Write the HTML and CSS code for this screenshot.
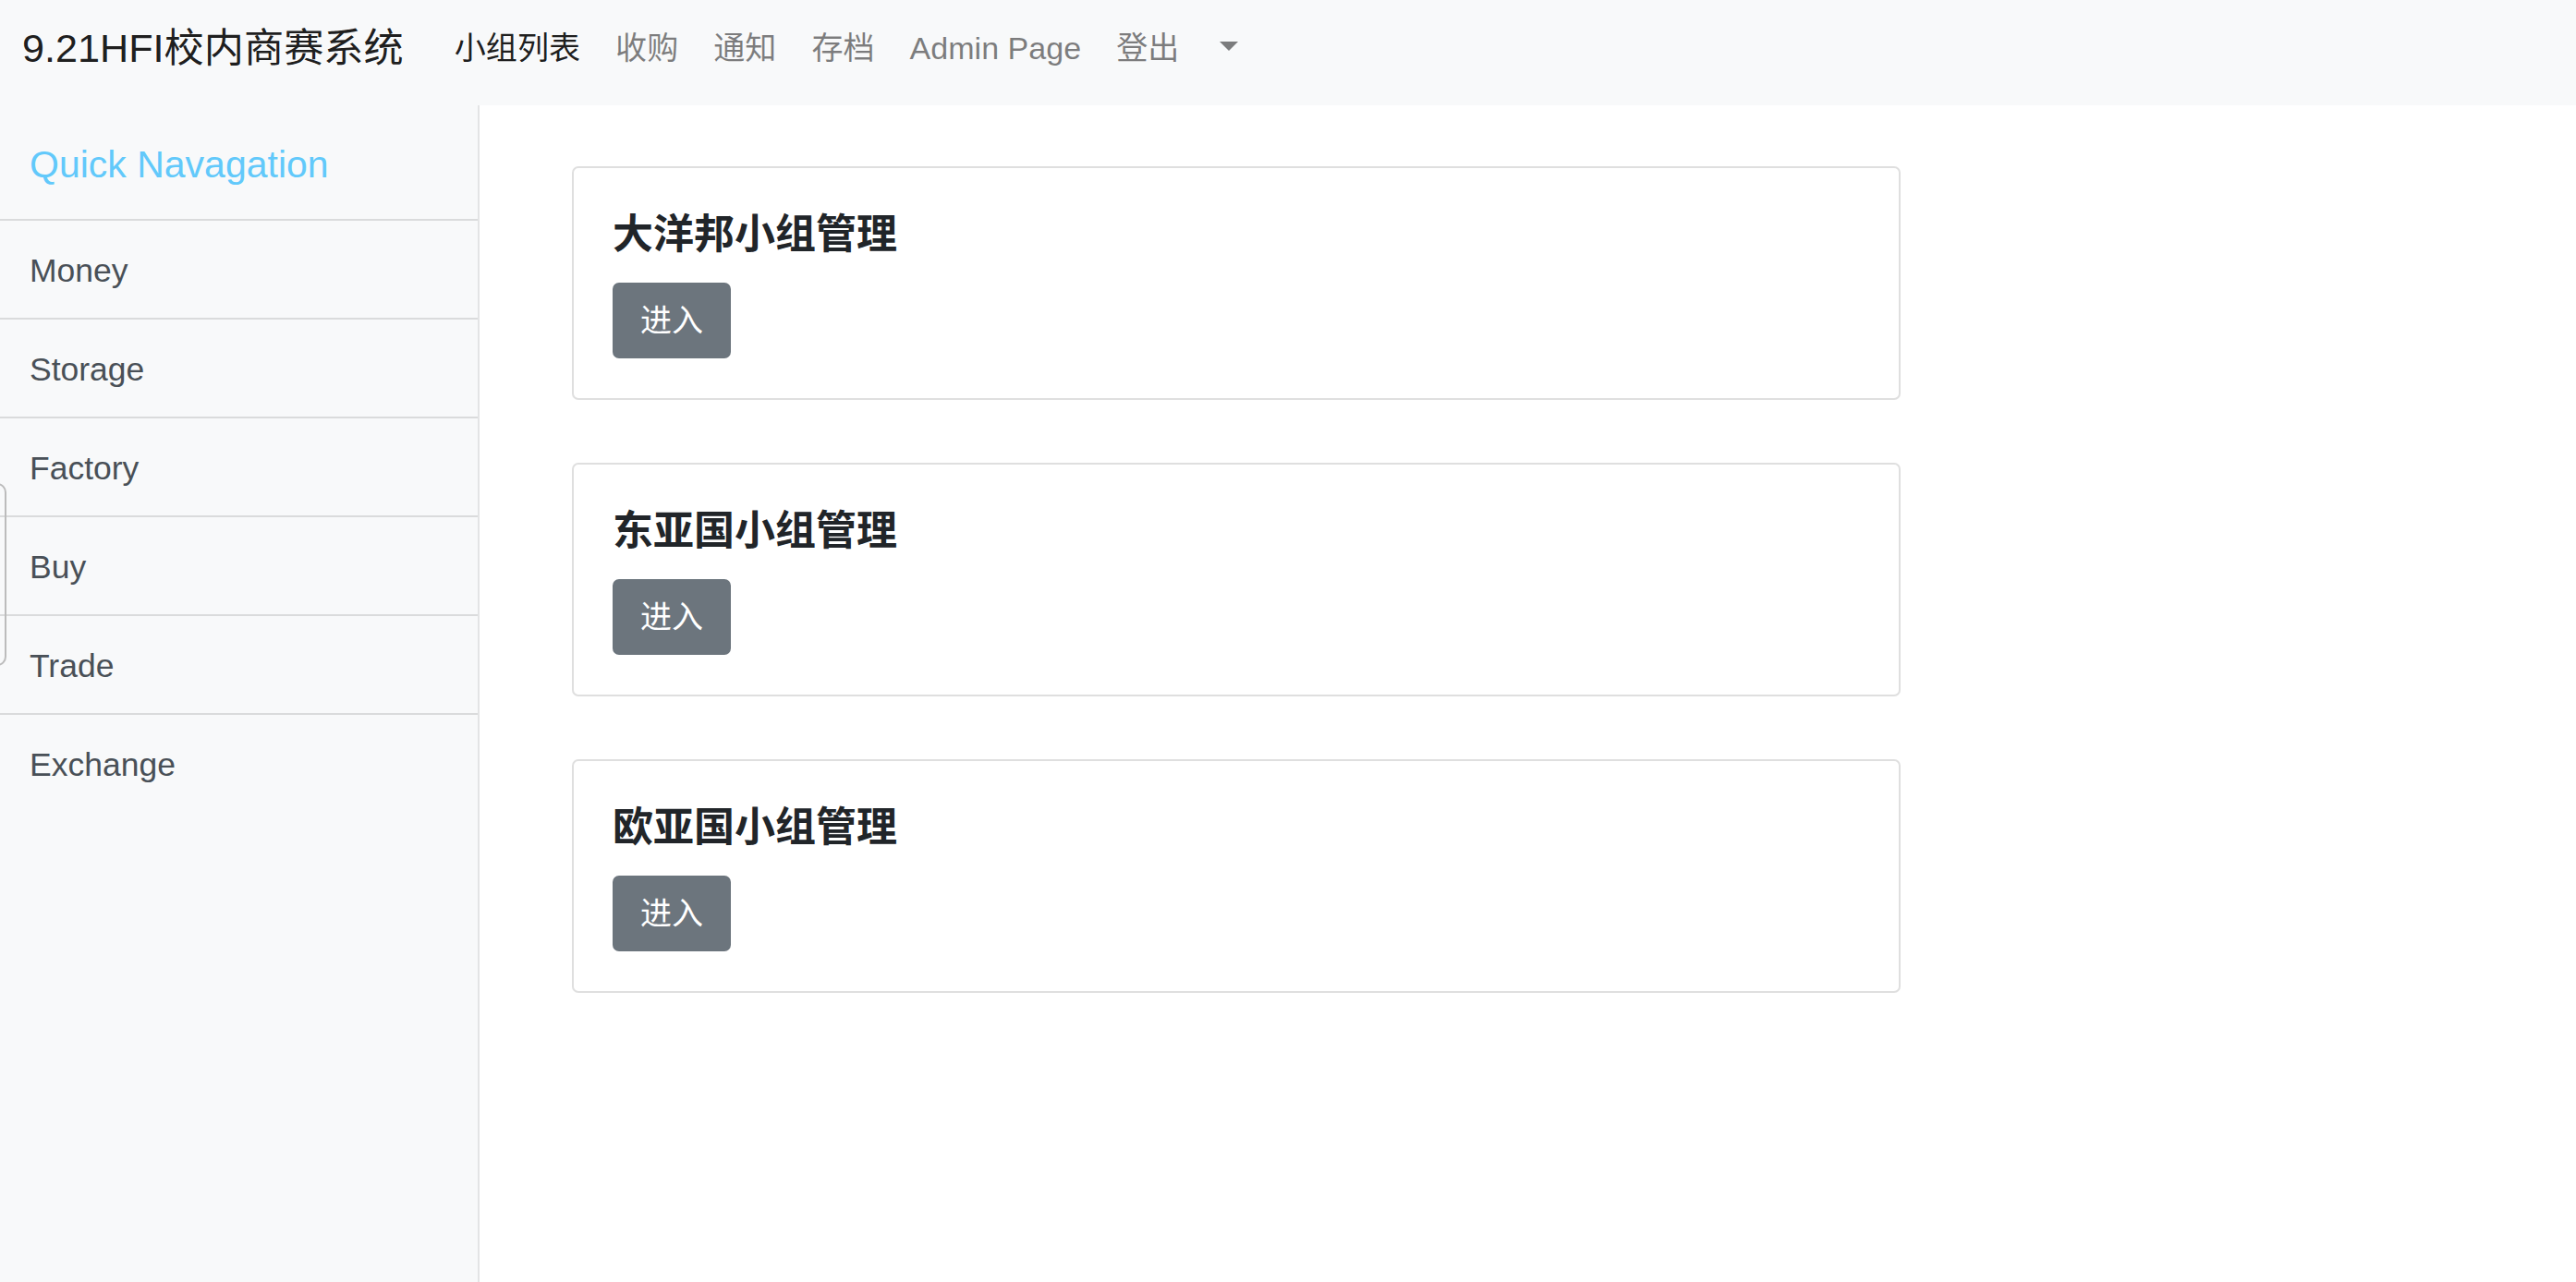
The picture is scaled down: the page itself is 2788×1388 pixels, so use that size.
FILE: index.html
```html
<!DOCTYPE html>
<html lang="zh-CN">
<head>
    <meta charset="UTF-8">
    <meta name="viewport" content="width=device-width, initial-scale=1.0">
    <title>9.21HFI校内商赛系统</title>
    <link rel="stylesheet" href="styles.css">
</head>
<body>
    <nav class="navbar">
        <a class="brand" href="#">9.21HFI校内商赛系统</a>
        <ul class="nav">
            <li><a class="nav-link active" href="#">小组列表</a></li>
            <li><a class="nav-link" href="#">收购</a></li>
            <li><a class="nav-link" href="#">通知</a></li>
            <li><a class="nav-link" href="#">存档</a></li>
            <li><a class="nav-link" href="#">Admin Page</a></li>
            <li><a class="nav-link" href="#">登出</a></li>
            <li><a class="nav-link dropdown-toggle" href="#"><span class="caret"></span></a></li>
        </ul>
    </nav>

    <div class="layout">
        <aside class="sidebar">
            <div class="sidebar-heading">Quick Navagation</div>
            <div class="list-group">
                <a class="list-item" href="#">Money</a>
                <a class="list-item" href="#">Storage</a>
                <a class="list-item" href="#">Factory</a>
                <a class="list-item" href="#">Buy</a>
                <a class="list-item" href="#">Trade</a>
                <a class="list-item" href="#">Exchange</a>
            </div>
        </aside>

        <main class="content">
            <div class="card">
                <h4 class="card-title">大洋邦小组管理</h4>
                <a class="btn" href="#">进入</a>
            </div>
            <div class="card">
                <h4 class="card-title">东亚国小组管理</h4>
                <a class="btn" href="#">进入</a>
            </div>
            <div class="card">
                <h4 class="card-title">欧亚国小组管理</h4>
                <a class="btn" href="#">进入</a>
            </div>
        </main>
    </div>

    <div class="side-handle"></div>
</body>
</html>
```

FILE: styles.css
```css
* {
    box-sizing: border-box;
}
body {
    margin: 0;
    min-height: 100vh;
    display: flex;
    flex-direction: column;
    font-family: "Liberation Sans", "Noto Sans CJK SC", sans-serif;
    font-size: 28.4px;
    line-height: 1.5;
    color: #212529;
    background-color: #fff;
}
a {
    text-decoration: none;
}

/* top bar */
.navbar {
    display: flex;
    align-items: center;
    height: 114px;
    padding: 20px 24px 30px;
    background-color: #f8f9fa;
}
.brand {
    font-size: 43.2px;
    line-height: 64px;
    color: rgba(0, 0, 0, 0.9);
    margin-right: 36px;
}
.nav {
    display: flex;
    align-items: center;
    list-style: none;
    margin: 0;
    padding: 0;
}
.nav-link {
    display: block;
    padding: 0 19px;
    font-size: 34.1px;
    line-height: 51px;
    color: rgba(0, 0, 0, 0.5);
}
.nav-link.active {
    color: rgba(0, 0, 0, 0.9);
}
.dropdown-toggle {
    display: flex;
    align-items: center;
    height: 51px;
    padding-bottom: 4px;
}
.caret {
    display: inline-block;
    margin-left: 6px;
    border-top: 10px solid #7b7c7d;
    border-left: 10.5px solid transparent;
    border-right: 10.5px solid transparent;
}

/* sidebar + main */
.layout {
    flex: 1;
    display: flex;
}
.sidebar {
    width: 519px;
    flex-shrink: 0;
    background-color: #f8f9fa;
    border-right: 2px solid #e3e4e5;
}
.sidebar-heading {
    padding: 40px 32px 34px;
    font-size: 41px;
    line-height: 1.2;
    color: #62c9fb;
}
.list-group {
    display: flex;
    flex-direction: column;
}
.list-item {
    display: block;
    padding: 28px 32px 25px;
    border-top: 2px solid #dadbdc;
    color: #495057;
    font-size: 35.5px;
    line-height: 52px;
}

.content {
    flex: 1;
    padding: 66px 0 0 100px;
}
.card {
    width: 1438px;
    padding: 46px 42px 43px;
    margin-bottom: 68px;
    border: 2px solid rgba(0, 0, 0, 0.125);
    border-radius: 7px;
    background-color: #fff;
}
.card-title {
    margin: 0 0 27px;
    font-size: 44px;
    line-height: 51px;
    font-weight: bold;
    color: #212529;
}
.btn {
    display: inline-block;
    padding: 13.5px 28px;
    font-size: 34px;
    line-height: 51px;
    color: #fff;
    background-color: #6c757d;
    border: 2px solid #6c757d;
    border-radius: 7px;
}

/* half-hidden tab sticking in from the left edge */
.side-handle {
    position: absolute;
    left: -40px;
    top: 523px;
    width: 47px;
    height: 198px;
    border: 2px solid #bcbcbc;
    border-radius: 10px;
}
```
